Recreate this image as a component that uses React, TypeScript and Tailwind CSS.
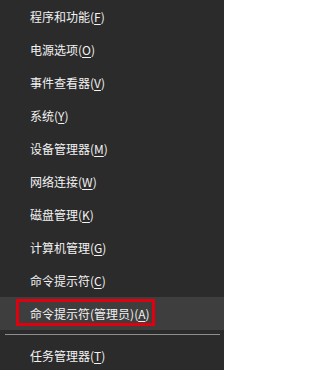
const items: { label: string; key: string }[] = [
  { label: "程序和功能", key: "F" },
  { label: "电源选项", key: "O" },
  { label: "事件查看器", key: "V" },
  { label: "系统", key: "Y" },
  { label: "设备管理器", key: "M" },
  { label: "网络连接", key: "W" },
  { label: "磁盘管理", key: "K" },
  { label: "计算机管理", key: "G" },
  { label: "命令提示符", key: "C" },
  { label: "命令提示符(管理员)", key: "A" },
];

function MenuItem({
  label,
  hotkey,
  active,
}: {
  label: string;
  hotkey: string;
  active?: boolean;
}) {
  return (
    <div
      className={`relative flex h-[33px] items-center pl-[30px] ${
        active ? "bg-[#3e3e3e]" : ""
      }`}
    >
      <span className="text-[12px] leading-none text-[#f2f2f2]">
        {label}(<span className="underline underline-offset-2">{hotkey}</span>)
      </span>
      {active && (
        <div className="absolute left-[16px] top-[2px] h-[27px] w-[139px] border-[3px] border-[#e1000e]" />
      )}
    </div>
  );
}

export default function App() {
  return (
    <div
      className="h-[370px] w-[224px] overflow-hidden bg-[#2b2b2b]"
      style={{ fontFamily: '"Noto Sans CJK SC", "Liberation Sans", sans-serif' }}
    >
      {items.map((item, i) => (
        <MenuItem
          key={item.label}
          label={item.label}
          hotkey={item.key}
          active={i === 9}
        />
      ))}
      <div className="flex h-[9px] items-center pl-[5px] pr-[4px]">
        <div className="h-px w-full bg-[#8f8f8f]" />
      </div>
      <MenuItem label="任务管理器" hotkey="T" />
    </div>
  );
}
